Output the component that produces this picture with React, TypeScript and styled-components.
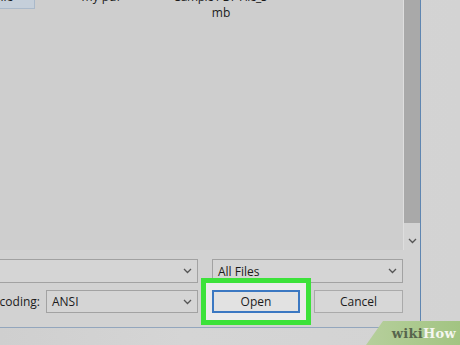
import React from 'react';
import styled, { createGlobalStyle } from 'styled-components';

const Global = createGlobalStyle`
  html, body { margin: 0; padding: 0; }
  body {
    background: #d6d6d6;
    font-family: "Open Sans", "Noto Sans", sans-serif;
    font-size: 12px;
    color: #1b1b1b;
  }
`;

const Screen = styled.div`
  position: relative;
  width: 460px;
  height: 345px;
  overflow: hidden;
  display: flex;
  align-items: flex-start;
  background: linear-gradient(to right, #cfcfcf 0%, #d5d5d5 40%, #d3d3d3 100%);
`;

const Dialog = styled.div`
  width: 421px;
  height: 328px;
  box-sizing: border-box;
  border-right: 1px solid #5f86b1;
  border-bottom: 1px solid #93a6bd;
  display: flex;
  flex-direction: column;
  background: #d2d2d2;
  flex-shrink: 0;
`;

const FileArea = styled.div`
  height: 250px;
  display: flex;
  flex-shrink: 0;
`;

const ListPane = styled.div`
  flex: 1;
  background: #cecece;
  overflow: hidden;
`;

const FileRow = styled.div`
  display: flex;
  gap: 12px;
  margin-top: -11px;
  margin-left: -73px;
`;

const Item = styled.div<{ $selected?: boolean }>`
  width: 108px;
  flex-shrink: 0;
  box-sizing: border-box;
  text-align: center;
  line-height: 16px;
  padding: 0 2px 3px;
  white-space: nowrap;
  align-self: flex-start;
  background: ${(p) => (p.$selected ? '#c5cfda' : 'transparent')};
  border: 1px solid ${(p) => (p.$selected ? '#aab9ca' : 'transparent')};
  border-top: none;
`;

const ItemLine = styled.div<{ $tight?: boolean }>`
  letter-spacing: ${(p) => (p.$tight ? '-0.5px' : '0')};
`;

const Scrollbar = styled.div`
  width: 17px;
  box-sizing: border-box;
  border-left: 1px solid #dedede;
  display: flex;
  flex-direction: column;
  background: #d3d3d3;
`;

const Thumb = styled.div`
  height: 223px;
  background: #a9a9a9;
`;

const ArrowBtn = styled.div`
  flex: 1;
  display: flex;
  justify-content: center;
  padding-top: 15px;
`;

const Footer = styled.div`
  flex: 1;
  padding: 9px 17px 0 0;
  display: flex;
  flex-direction: column;
  gap: 7px;
`;

const Row = styled.div<{ $h: number }>`
  display: flex;
  align-items: stretch;
  height: ${(p) => p.$h}px;
`;

const Combo = styled.div<{ $w: number; $ml?: number }>`
  width: ${(p) => p.$w}px;
  margin-left: ${(p) => p.$ml ?? 0}px;
  box-sizing: border-box;
  border: 1px solid #a2a2a2;
  background: #d5d5d5;
  display: flex;
  align-items: center;
  justify-content: space-between;
  padding: 0 5px;
  flex-shrink: 0;
`;

const Label = styled.div`
  width: 46px;
  display: flex;
  align-items: center;
  white-space: nowrap;
  overflow: hidden;
  direction: rtl;
  flex-shrink: 0;
`;

const LabelText = styled.span`
  direction: ltr;
  padding-right: 6px;
`;

const OpenWrap = styled.div`
  position: relative;
  width: 88px;
  margin-left: 14px;
  flex-shrink: 0;
  display: flex;
`;

const Highlight = styled.div`
  position: absolute;
  top: -12px;
  left: -11px;
  right: -11px;
  bottom: -12px;
  border: 5px solid #3ce23a;
  background: #ebebeb;
  z-index: 0;
`;

const Button = styled.button<{ $primary?: boolean; $w: number; $ml?: number }>`
  position: relative;
  z-index: 1;
  width: ${(p) => p.$w}px;
  margin-left: ${(p) => p.$ml ?? 0}px;
  box-sizing: border-box;
  font: inherit;
  color: #1b1b1b;
  padding: 0;
  border: ${(p) => (p.$primary ? '2px solid #3b78c2' : '1px solid #aaaaaa')};
  background: ${(p) => (p.$primary ? '#e2e2e2' : '#d7d7d7')};
  display: flex;
  align-items: center;
  justify-content: center;
  flex-shrink: 0;
`;

const Watermark = styled.div`
  position: absolute;
  right: 0;
  bottom: 0;
  width: 94px;
  height: 24px;
  clip-path: polygon(17px 0, 100% 0, 100% 100%, 0 100%);
  background: linear-gradient(to right, #b6cf9c, #a2c482);
  display: flex;
  align-items: center;
  justify-content: flex-end;
  padding: 1px 4px 0 0;
  box-sizing: border-box;
  font-family: "DejaVu Serif", "Liberation Serif", serif;
  font-weight: bold;
  font-size: 13px;
  letter-spacing: 0.3px;
`;

const Wiki = styled.span`
  color: #57654d;
`;

const How = styled.span`
  color: #f4f6f0;
`;

const Chevron = () => (
  <svg width="9" height="6" viewBox="0 0 9 6">
    <polyline points="1,1 4.5,4.5 8,1" fill="none" stroke="#555" strokeWidth="1.3" />
  </svg>
);

export default function App() {
  return (
    <>
      <Global />
      <Screen>
        <Dialog>
          <FileArea>
            <ListPane>
              <FileRow>
                <Item $selected>
                  <ItemLine>Untitled file</ItemLine>
                </Item>
                <Item>
                  <ItemLine>my pdf</ItemLine>
                </Item>
                <Item>
                  <ItemLine $tight>Sample PDF File_5</ItemLine>
                  <ItemLine>mb</ItemLine>
                </Item>
              </FileRow>
            </ListPane>
            <Scrollbar>
              <Thumb />
              <ArrowBtn>
                <Chevron />
              </ArrowBtn>
            </Scrollbar>
          </FileArea>
          <Footer>
            <Row $h={24}>
              <Combo $w={208} $ml={-10}>
                <span />
                <Chevron />
              </Combo>
              <Combo $w={191} $ml={14}>
                <span>All Files</span>
                <Chevron />
              </Combo>
            </Row>
            <Row $h={23}>
              <Label>
                <LabelText>Encoding:</LabelText>
              </Label>
              <Combo $w={152}>
                <span>ANSI</span>
                <Chevron />
              </Combo>
              <OpenWrap>
                <Highlight />
                <Button $primary $w={88}>Open</Button>
              </OpenWrap>
              <Button $w={89} $ml={14}>Cancel</Button>
            </Row>
          </Footer>
        </Dialog>
        <Watermark>
          <Wiki>wiki</Wiki>
          <How>How</How>
        </Watermark>
      </Screen>
    </>
  );
}
